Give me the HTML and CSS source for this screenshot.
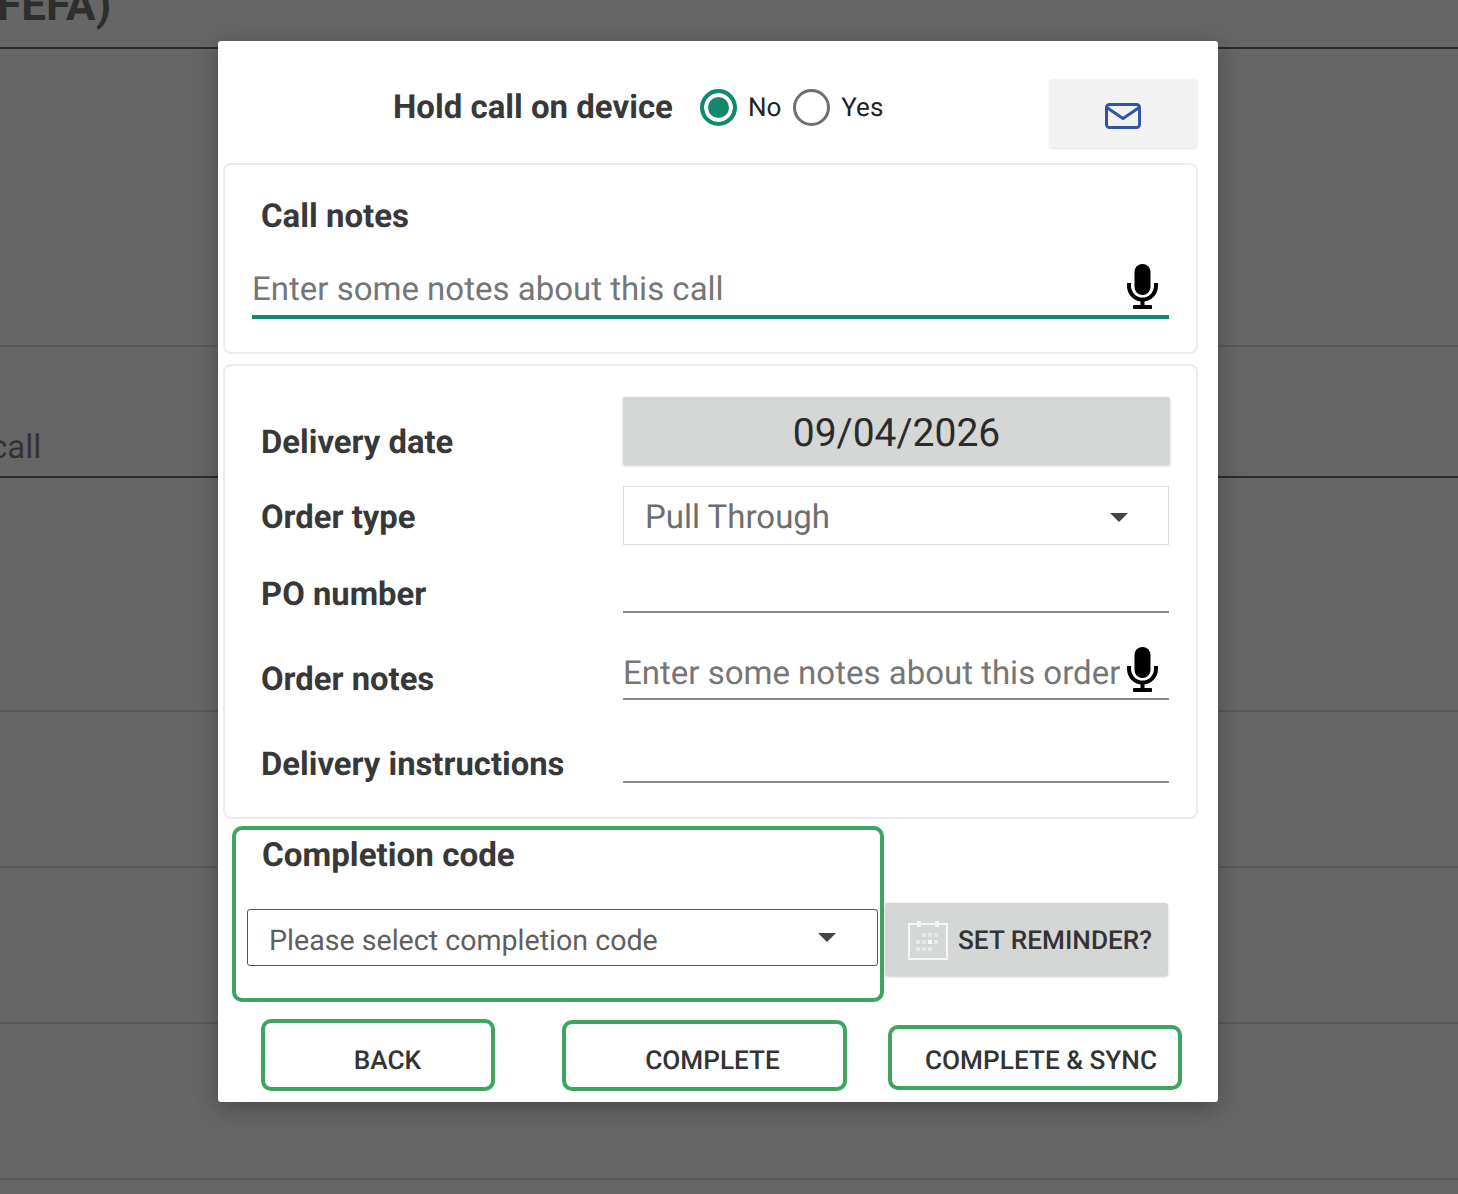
FILE: index.html
```html
<!DOCTYPE html>
<html lang="en">
<head>
  <meta charset="UTF-8" />
  <meta name="viewport" content="width=device-width, initial-scale=1.0" />
  <title>Complete call</title>
  <link rel="stylesheet" href="styles.css">
</head>
<body>
  <div class="page">
    <div class="page-row page-title dark-line">FEFA)</div>
    <div class="page-row row-a"></div>
    <div class="page-row row-b dark-line">call</div>
    <div class="page-row row-c"></div>
    <div class="page-row row-d"></div>
    <div class="page-row row-d"></div>
    <div class="page-row row-d"></div>
  </div>

  <div class="modal">
    <div class="hold-row">
      <span class="hold-label">Hold call on device</span>
      <input class="radio" type="radio" name="hold" id="hold-no" checked />
      <label class="radio-label" for="hold-no">No</label>
      <input class="radio" type="radio" name="hold" id="hold-yes" />
      <label class="radio-label" for="hold-yes">Yes</label>
      <button class="mail-btn" aria-label="Email">
        <svg width="36" height="26" viewBox="0 0 36 26" fill="none" stroke="#2f55a4" stroke-width="3" stroke-linejoin="round" stroke-linecap="round">
          <rect x="1.5" y="1.5" width="33" height="23" rx="3" />
          <path d="M2.5 5 L18 15.5 L33.5 5" />
        </svg>
      </button>
    </div>

    <div class="card notes-card">
      <div class="field-title">Call notes</div>
      <div class="notes-input">
        <input type="text" placeholder="Enter some notes about this call" />
        <svg class="mic" width="31" height="45" viewBox="0 0 31 45">
          <rect x="7.5" y="0" width="16" height="31" rx="8" fill="#000" />
          <path d="M2 19 v3 a13.5 13.5 0 0 0 27 0 v-3" fill="none" stroke="#000" stroke-width="4" />
          <rect x="13.5" y="35" width="4" height="8" fill="#000" />
          <rect x="6" y="41" width="19" height="4" rx="1" fill="#000" />
        </svg>
      </div>
    </div>

    <div class="card order-card">
      <div class="order-row row-date">
        <label>Delivery date</label>
        <div class="date-btn">09/04/2026</div>
      </div>
      <div class="order-row row-type">
        <label>Order type</label>
        <div class="select-box">Pull Through<span class="caret"></span></div>
      </div>
      <div class="order-row row-po">
        <label>PO number</label>
        <input class="line-input" type="text" />
      </div>
      <div class="order-row row-notes">
        <label>Order notes</label>
        <div class="line-wrap">
          <input class="line-input" type="text" placeholder="Enter some notes about this order" />
          <svg class="mic" width="31" height="45" viewBox="0 0 31 45">
            <rect x="7.5" y="0" width="16" height="31" rx="8" fill="#000" />
            <path d="M2 19 v3 a13.5 13.5 0 0 0 27 0 v-3" fill="none" stroke="#000" stroke-width="4" />
            <rect x="13.5" y="35" width="4" height="8" fill="#000" />
            <rect x="6" y="41" width="19" height="4" rx="1" fill="#000" />
          </svg>
        </div>
      </div>
      <div class="order-row row-instr">
        <label>Delivery instructions</label>
        <input class="line-input" type="text" />
      </div>
    </div>

    <div class="completion-row">
      <div class="completion-box">
        <div class="field-title">Completion code</div>
        <div class="code-select">Please select completion code<span class="caret"></span></div>
      </div>
      <button class="reminder-btn">
        <svg width="40" height="40" viewBox="0 0 40 40" fill="none">
          <rect x="1" y="4" width="38" height="35" stroke="#f4f5f5" stroke-width="2" />
          <rect x="9" y="1" width="4" height="6" fill="#f4f5f5" />
          <rect x="27" y="1" width="4" height="6" fill="#f4f5f5" />
          <g fill="#e6e8e8">
            <rect x="14" y="13" width="4" height="4" />
            <rect x="20" y="13" width="4" height="4" />
            <rect x="26" y="13" width="4" height="4" />
            <rect x="8" y="20" width="4" height="4" />
            <rect x="14" y="20" width="4" height="4" />
            <rect x="26" y="20" width="4" height="4" />
            <rect x="8" y="27" width="4" height="4" />
            <rect x="14" y="27" width="4" height="4" />
            <rect x="20" y="27" width="4" height="4" />
          </g>
          <rect x="20" y="20" width="4" height="4" fill="#fff" />
        </svg>
        SET REMINDER?
      </button>
    </div>

    <div class="action-row">
      <button class="action-btn btn-back">BACK</button>
      <button class="action-btn btn-complete">COMPLETE</button>
      <button class="action-btn btn-sync">COMPLETE &amp; SYNC</button>
    </div>
  </div>
</body>
</html>
```

FILE: styles.css
```css
* {
  box-sizing: border-box;
}
html, body {
  margin: 0;
  height: 100%;
  overflow: hidden;
}
body {
  font-family: Roboto, "Liberation Sans", sans-serif;
  background: #666;
  color: #383838;
  text-rendering: geometricPrecision;
}
button {
  font-family: inherit;
  text-rendering: inherit;
  cursor: pointer;
}

/* dimmed page behind the dialog */
.page {
  height: 1194px;
  overflow: hidden;
  color: #2e2e2e;
}
.page-row {
  border-bottom: 2px solid #5a5a5a;
}
.dark-line {
  border-bottom-color: #2a2a2a;
}
.page-title {
  height: 49px;
  font-size: 44px;
  font-weight: 700;
  line-height: 10px;
  margin-left: -3px;
}
.row-a {
  height: 298px;
}
.row-b {
  height: 131px;
  padding-top: 81px;
  font-size: 33px;
  line-height: 40px;
  margin-left: -10px;
  color: #333;
}
.row-c {
  height: 234px;
}
.row-d {
  height: 156px;
}

/* dialog */
.modal {
  position: absolute;
  left: 218px;
  top: 41px;
  width: 1000px;
  height: 1061px;
  padding: 0 20px 0 5px;
  background: #fff;
  border-radius: 3px;
  box-shadow: 0 6px 24px rgba(0,0,0,0.3);
}
.hold-row {
  display: flex;
  align-items: center;
  height: 122px;
  padding-left: 170px;
  padding-top: 10px;
}
.hold-label {
  font-size: 33px;
  font-weight: 700;
  margin-right: 27px;
  margin-top: 1px;
}
.radio {
  appearance: none;
  width: 37px;
  height: 37px;
  margin: 0 11px 0 0;
  border: 3px solid #6f6f6f;
  border-radius: 50%;
  background: #fff;
}
.radio:checked {
  border: 4px solid #12896f;
  background: #12896f;
  box-shadow: inset 0 0 0 4px #fff;
}
.radio-label {
  font-size: 26px;
  margin-right: 12px;
  margin-top: 1px;
  color: #222;
}
.mail-btn {
  display: flex;
  align-items: center;
  justify-content: center;
  width: 149px;
  height: 69px;
  margin-left: auto;
  margin-top: 12px;
  padding: 6px 2px 0 0;
  border: none;
  border-radius: 4px;
  background: #f2f2f2;
  box-shadow: 0 1px 2px rgba(0,0,0,0.1);
}

.card {
  background: #fff;
  border: 2px solid #ebebeb;
  border-radius: 8px;
}
.notes-card {
  height: 191px;
  padding: 30px 27px 0 27px;
  margin-bottom: 10px;
}
.field-title {
  font-size: 33px;
  font-weight: 700;
  line-height: 44px;
  padding-left: 9px;
}
.notes-input {
  display: flex;
  align-items: flex-end;
  height: 78px;
  margin-top: 2px;
  padding: 0 11px 6px 0;
  border-bottom: 4px solid #12896f;
}
.notes-input input {
  flex: 1;
  min-width: 0;
  margin-bottom: -1px;
}
input[type="text"] {
  border: none;
  outline: none;
  padding: 0;
  font-family: inherit;
  font-size: 33px;
  text-rendering: inherit;
  line-height: 40px;
  height: 40px;
  background: transparent;
}
input::placeholder {
  color: #767676;
  opacity: 1;
}
.mic {
  flex: none;
}

.order-card {
  height: 455px;
  padding: 31px 26px 0 36px;
}
.order-row {
  display: grid;
  grid-template-columns: 362px 546px;
  margin-bottom: 21px;
}
.order-row label {
  align-self: end;
  font-size: 32.8px;
  font-weight: 700;
  line-height: 40px;
}
.row-date {
  height: 68px;
}
.row-date label {
  margin-bottom: 2px;
}
.row-type {
  height: 59px;
  margin-bottom: 25px;
}
.row-type label {
  margin-bottom: 7px;
}
.row-po {
  height: 43px;
  margin-bottom: 37px;
}
.row-po label {
  margin-bottom: -2px;
}
.row-notes {
  height: 50px;
  margin-bottom: 40px;
}
.row-notes label {
  margin-bottom: 0;
}
.row-instr {
  height: 43px;
}
.row-instr label {
  margin-bottom: -2px;
}
.date-btn {
  display: flex;
  align-items: center;
  justify-content: center;
  width: 547px;
  background: #d5d7d7;
  border-radius: 2px;
  font-size: 39px;
  color: #2b2b2b;
  box-shadow: 0 1px 3px rgba(0,0,0,0.2);
  padding-top: 4px;
}
.select-box {
  display: flex;
  align-items: center;
  justify-content: space-between;
  padding: 4px 40px 0 21px;
  border: 1px solid #dcdcdc;
  font-size: 33px;
  color: #6e6e6e;
}
.caret {
  width: 0;
  height: 0;
  border-left: 9px solid transparent;
  border-right: 9px solid transparent;
  border-top: 9px solid #444;
}
.line-input, .line-wrap {
  align-self: end;
  width: 100%;
  border-bottom: 2px solid #888 !important;
}
.line-input {
  height: 43px !important;
}
.line-wrap {
  display: flex;
  align-items: flex-end;
  height: 50px;
  padding-bottom: 6px;
}
.line-wrap .line-input {
  flex: 1;
  min-width: 0;
  height: 40px !important;
  margin-bottom: -2px;
  border-bottom: none !important;
}
.line-wrap .mic {
  margin-right: 11px;
  margin-left: 7px;
}

.completion-row {
  display: flex;
  align-items: flex-start;
  margin-top: 7px;
}
.completion-box {
  width: 652px;
  height: 176px;
  margin-left: 9px;
  padding: 4px 3px 0 11px;
  border: 4px solid #3fa45f;
  border-radius: 10px;
}
.completion-box .field-title {
  padding-left: 15px;
  font-size: 33.2px;
}
.code-select {
  display: flex;
  align-items: center;
  justify-content: space-between;
  width: 631px;
  height: 57px;
  margin-top: 31px;
  padding: 4px 41px 0 21px;
  border: 1.5px solid #4a5568;
  border-radius: 3px;
  font-size: 28.6px;
  color: #5f5f5f;
}
.code-select .caret {
  margin-top: -4px;
}
.reminder-btn {
  display: flex;
  align-items: center;
  gap: 10px;
  width: 283px;
  height: 73px;
  margin: 77px 0 0 1px;
  padding: 2px 0 0 23px;
  border: none;
  border-radius: 3px;
  background: #d5d7d7;
  box-shadow: 0 1px 3px rgba(0,0,0,0.2);
  font-size: 26.2px;
  font-weight: 500;
  color: #333;
  white-space: nowrap;
}
.reminder-btn svg {
  margin-top: -2px;
}

.action-row {
  display: flex;
  align-items: flex-start;
  margin-top: 17px;
  padding-left: 38px;
}
.action-btn {
  height: 72px;
  padding: 0;
  background: #fff;
  border: 4px solid #3fa45f;
  border-radius: 10px;
  font-size: 26.2px;
  font-weight: 500;
  color: #333;
}
.btn-back {
  width: 234px;
  padding: 12px 0 0 19px;
  margin-right: 67px;
}
.btn-complete {
  width: 285px;
  height: 71px;
  margin-top: 1px;
  padding: 11px 0 0 16px;
  margin-right: 41px;
}
.btn-sync {
  width: 294px;
  height: 65px;
  margin-top: 6px;
  padding: 6px 0 0 12px;
}
```
